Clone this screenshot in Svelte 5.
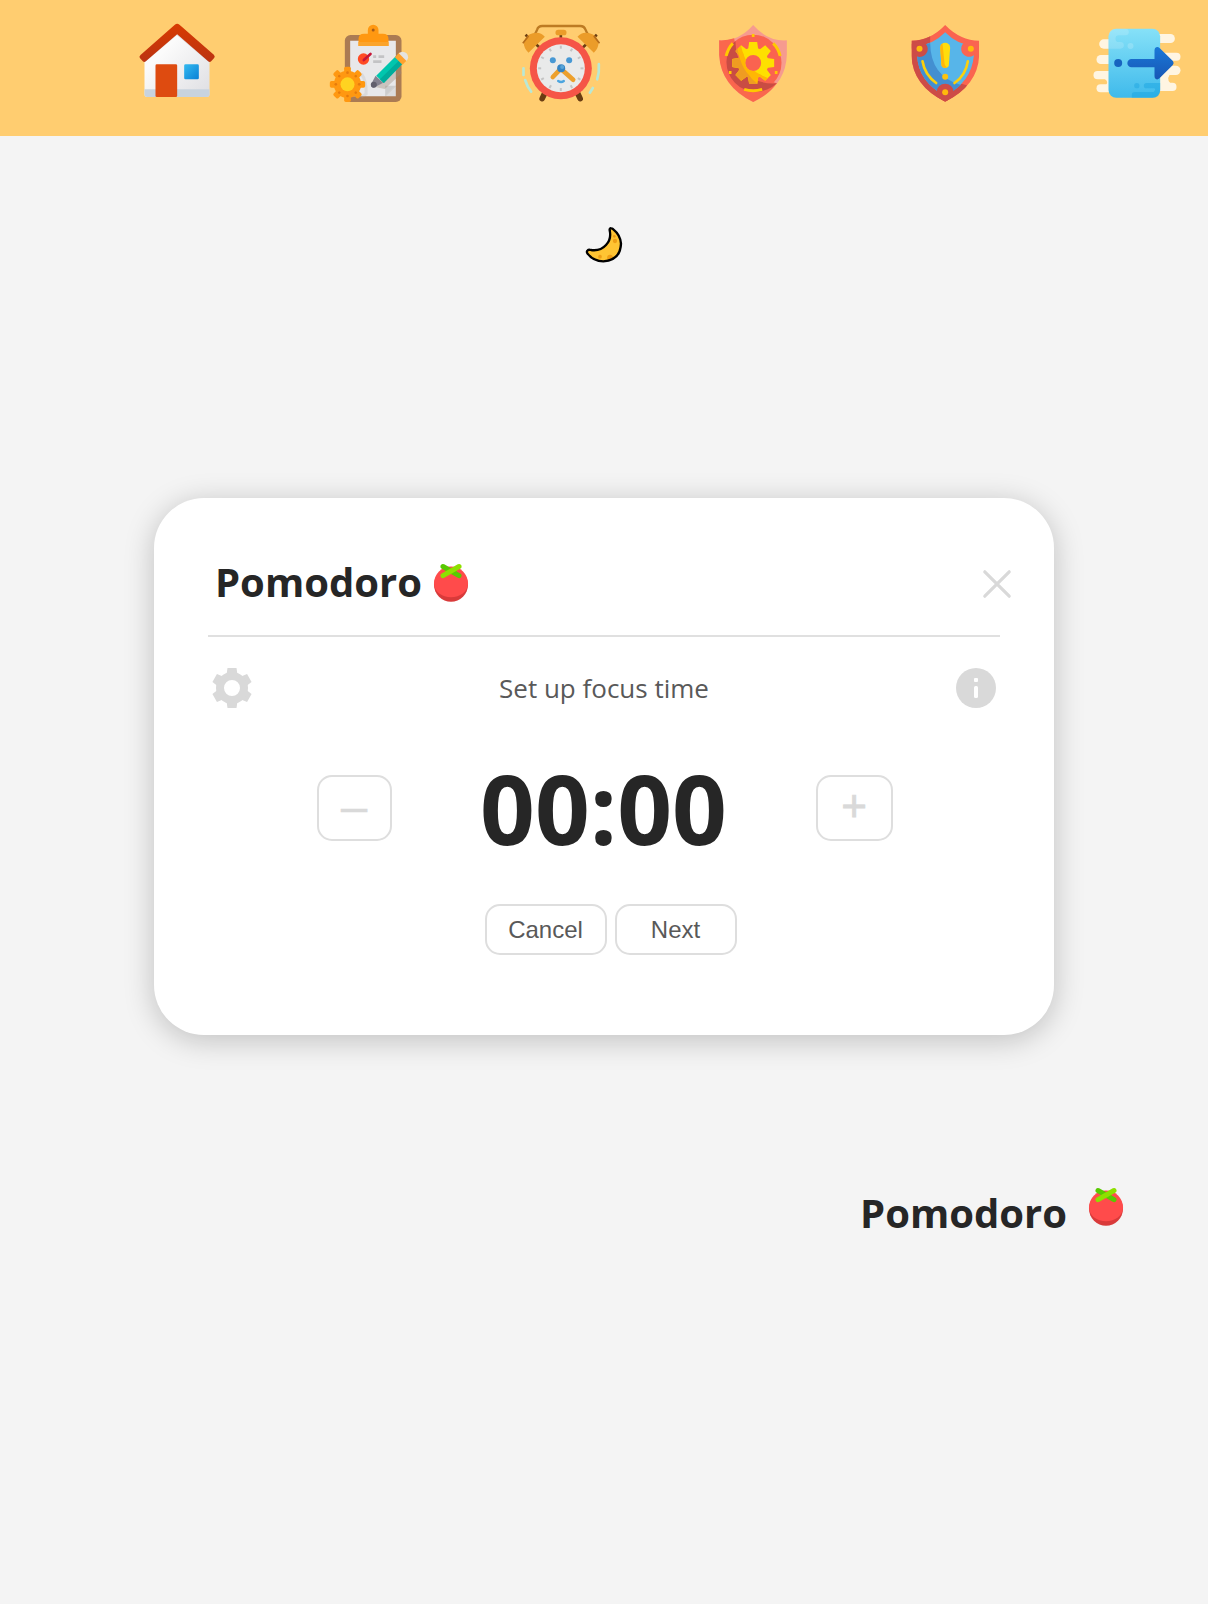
<script>
  let minutes = $state(0);
  const clock = $derived(String(minutes).padStart(2, '0') + ':00');
  const teeth = [0, 45, 90, 135, 180, 225, 270, 315];
  const cogTeeth = [0, 60, 120, 180, 240, 300];
  const ticks = [0, 30, 60, 90, 120, 150, 180, 210, 240, 270, 300, 330];
  const moon = 'M119 46q-1-7 5-6 3 0 6 3 22 18 23 43-2 50-53 53-30 0-48-24-3-6 1-9 3-3 10-1 28 4 45-15 17-18 11-44z';
</script>

{#snippet tomato()}
  <svg class="tomato" viewBox="0 0 36 40" aria-hidden="true">
    <circle cx="18" cy="21.8" r="17" fill="#d93a3a" />
    <path d="M1 20.500a17 17 0 0 1 34 0c0 8-8 13.800-17 13.800S1 28.500 1 20.500z" fill="#ff4b4b" />
    <path d="M10 3.500 26 12.700" stroke="#58c900" stroke-width="5" stroke-linecap="round" />
    <path d="M10 12.700 26 3.500" stroke="#8ee000" stroke-width="5" stroke-linecap="round" />
  </svg>
{/snippet}

<nav>
  <svg viewBox="-1.5 12 288 288" role="img" aria-label="Home">
    <defs>
      <linearGradient id="wall" x1="0" y1="0" x2="1" y2="1"><stop offset="0.3" stop-color="#fbfbfb" /><stop offset="1" stop-color="#dedee2" /></linearGradient>
      <linearGradient id="roof" x1="0" y1="0" x2="0" y2="1"><stop offset="0" stop-color="#d83b01" /><stop offset="1" stop-color="#bb3312" /></linearGradient>
      <linearGradient id="pane" x1="0" y1="0" x2="1" y2="1"><stop offset="0" stop-color="#33baf0" /><stop offset="1" stop-color="#0a80d6" /></linearGradient>
    </defs>
    <path d="M45 145 142 62l98 83v108q0 8-8 8H53q-8 0-8-8z" fill="url(#wall)" />
    <path d="M45 238h195v15q0 8-8 8H53q-8 0-8-8z" fill="#c8d3de" />
    <rect x="78" y="163" width="65" height="98" rx="4" fill="#de4b10" />
    <rect x="164" y="163" width="44" height="45" rx="4" fill="url(#pane)" />
    <path d="M45 153 142 71l98 82" fill="none" stroke="#000" stroke-opacity=".1" stroke-width="7" />
    <path d="M136 44q7-5 14 0l103 90q5 5 1 10l-9 10q-4 4-9 0l-93-81-94 81q-5 4-9 0l-9-10q-3-5 2-9z" fill="url(#roof)" />
  </svg>

  <svg viewBox="4.5 0 288 288" role="img" aria-label="Tasks">
    <rect x="76" y="63" width="170" height="201" rx="17" fill="#ab7b53" />
    <path d="M92 80h137v135l-32 32H92z" fill="#e8e8ea" />
    <path d="M197 247v-32h32z" fill="#ccc" /><path d="M197 247l32-32v32z" fill="#dcdcdd" />
    <path d="M117 96V75q0-16 17-16h11V48a16 16 0 0 1 32 0v11h13q17 0 17 16v21z" fill="#ff9811" />
    <path d="M117 84h90v12h-90z" fill="#fba42b" /><circle cx="161" cy="48" r="4.500" fill="#a65c18" />
    <circle cx="132" cy="135" r="17" fill="#ff4b24" />
    <path d="M133 138l20-18" stroke="#c71738" stroke-width="8" stroke-linecap="round" />
    <path d="M161 128h9M177 128h17M161 143h25" stroke="#c3c3c5" stroke-width="8" />
    <path d="M170 220l70-62 6 20-50 47z" fill="#9d8c7c" opacity=".4" />
    <path d="M155 211l13-26 23 21-25 14q-12 4-11-9z" fill="#858390" />
    <circle cx="163" cy="212" r="9" fill="#62606d" />
    <path d="M170 185l60-60 21 22-58 60z" fill="#00c6ae" /><path d="M181 196l60-59 10 10-58 60z" fill="#00ac9b" />
    <path d="M226 130l14-15 23 23-14 14z" fill="#ffa22d" />
    <path d="M238 118a16 16 0 1 1 23 23z" fill="#e5e3df" />
    <path d="M126 180q15 20 14 60l-15 9" fill="none" stroke="#aaa" stroke-opacity=".22" stroke-width="9" />
    {#each teeth as angle}<rect x="74" y="158" width="20" height="26" rx="5" fill="#ff9811" transform="rotate({angle} 84 211)" />{/each}
    <circle cx="84" cy="211" r="41" fill="#ff9811" />
    {#each teeth as angle}<circle cx="84" cy="176" r="4" fill="#e67b0c" transform="rotate({angle} 84 211)" />{/each}
    <circle cx="84" cy="211" r="21" fill="#ffd321" />
  </svg>

  <svg viewBox="4.5 0 288 288" role="img" aria-label="Timer">
    <path d="M55 73q14-5 22-26 3-11 15-11h114q12 0 16 11 8 21 22 26" fill="none" stroke="#bd7b23" stroke-width="7" />
    <path d="M42 62 85 101M256 62 213 101M148 52v22" stroke="#6a3d12" stroke-width="8" />
    <path d="M37 83q8-22 27-25 21-7 36 10l-49 48q-15-14-14-33zM261 83q-8-22-27-25-21-7-36 10l49 48q15-14 14-33z" fill="#eb9c29" />
    <rect x="132" y="47" width="33" height="17" rx="8" fill="#eb9c29" />
    <path d="M34 88 51 66M264 88 247 66" stroke="#b66d1c" stroke-width="5" />
    <path d="M100 237 92 254M198 237 206 254" stroke="#6a3d12" stroke-width="17" stroke-linecap="round" />
    <path d="M36 163v20M41 198q6 20 18 35M262 150q2 24-5 46M244 222l-9 14" fill="none" stroke="#b9e8d5" stroke-width="8" stroke-linecap="round" />
    <circle cx="148" cy="163" r="93" fill="#f55547" /><circle cx="148" cy="163" r="72" fill="#e9eaea" />
    {#each ticks as angle}<path d="M148 95v9" stroke="#c4c4c4" stroke-width="6" transform="rotate({angle} 148 163)" />{/each}
    <circle cx="124" cy="139" r="9" fill="#4798d4" /><circle cx="173" cy="139" r="9" fill="#4798d4" />
    <path d="M148 164l-24 25M148 164l37 33" stroke="#eda02c" stroke-width="14" stroke-linecap="round" />
    <circle cx="149" cy="163" r="12" fill="#3484c4" /><circle cx="152" cy="159" r="6" fill="#59a5d8" />
    <path d="M140 201q9 6 17 0" fill="none" stroke="#4ca5df" stroke-width="7" stroke-linecap="round" />
  </svg>

  <svg viewBox="1.5 0 288 288" role="img" aria-label="Protection settings">
    <defs>
      <clipPath id="gear-shade"><path d="M60 60h38q-4 70 28 115 14 20 34 36H60z" /></clipPath>
      <clipPath id="gear-mid"><path d="M60 60h45q5 80 50 115 25 15 45 20v20H60z" /></clipPath>
      <g id="gear">
        {#each teeth as angle}<path d="M134 84h24l4 28h-32z" transform="rotate({angle} 146 147)" />{/each}
        <path fill-rule="evenodd" d="M146 101a46 46 0 1 0 0 92 46 46 0 0 0 0-92zm0 22a24 24 0 1 1 0 48 24 24 0 0 1 0-48z" />
      </g>
    </defs>
    <path d="M44 79q58 4 102-46 44 50 101 46v44q-3 93-101 141Q49 216 44 123z" fill="#f69b8f" />
    <path d="M44 79q24 1 45-6 10 100 128 135-25 35-71 56Q49 216 44 123z" fill="#fa674d" />
    <circle cx="146" cy="147" r="85" fill="#fa6350" />
    <path d="M93 80a85 85 0 0 0 124 128q-70 5-101-47-24-36-23-81z" fill="#c94c43" />
    <use href="#gear" fill="#fee000" />
    <use href="#gear" fill="#ffb703" clip-path="url(#gear-mid)" />
    <use href="#gear" fill="#ef9c22" clip-path="url(#gear-shade)" />
    <path d="M85 88q-14 14-20 38M206 88q15 14 21 38M119 226q27 8 54 0" fill="none" stroke="#ffc900" stroke-width="9" />
    <path d="M142 60h8v9h-8zM73 171h8v9h-8zM211 171h8v9h-8z" fill="#ffc900" />
  </svg>

  <svg viewBox="7.5 0 288 288" role="img" aria-label="Alerts">
    <defs><clipPath id="shield-clip"><path d="M51 80q56 0 101-47 46 47 102 47v45q-4 89-102 138Q54 214 51 125z" /></clipPath></defs>
    <g clip-path="url(#shield-clip)">
      <path d="M40 20h230v250H40z" fill="#fa6450" /><path d="M40 20h67v85q7 85 110 109v60H40z" fill="#cd4c47" />
      <path d="M68 96q48-4 84-41 36 37 86 41v30q-7 77-86 120-80-43-84-120z" fill="#57b5e9" />
      <path d="M68 96q20-2 39-9 1 100 92 126-19 18-47 33-80-43-84-120z" fill="#438fd1" />
      <path d="M74 81a24 24 0 1 1-13 43L45 92z" fill="#cd4c47" />
      <path d="M229 81a24 24 0 1 0 9 43l18-32z" fill="#fa6450" />
      <path d="M127 248v-14a25 25 0 1 1 50 0v14l-25 18z" fill="#cd4c47" />
    </g>
    <circle cx="75" cy="104" r="9" fill="#ffb90c" /><circle cx="229" cy="104" r="9" fill="#ffb90c" /><circle cx="152" cy="235" r="9" fill="#ffb90c" />
    <path d="M84 142q7 41 41 65M220 142q-6 41-40 65" fill="none" stroke="#fcd00c" stroke-width="8" stroke-linecap="round" />
    <path d="M137 101a15 15 0 0 1 30 0l-4 53q-2 8-11 8t-11-8z" fill="#ffdd0c" />
    <path d="M137 101q0-9 7-13l6 60q2 11 9 12-16 6-18-6z" fill="#ffb60a" />
    <circle cx="152" cy="188" r="9" fill="#fcc30c" />
  </svg>

  <svg viewBox="13.5 0 288 288" role="img" aria-label="Log out">
    <defs>
      <linearGradient id="door" x1="0" y1="0" x2="0" y2="1"><stop offset="0" stop-color="#86e1f8" /><stop offset="1" stop-color="#3fbaeb" /></linearGradient>
      <linearGradient id="arrow" x1="0" y1="0" x2="0" y2="1"><stop offset="0" stop-color="#1978d8" /><stop offset="1" stop-color="#1857b5" /></linearGradient>
    </defs>
    <g fill="#fff5e2">
      <rect x="44" y="76" width="80" height="28" rx="14" /><rect x="36" y="123" width="80" height="27" rx="13" />
      <rect x="27" y="171" width="80" height="25" rx="12" /><rect x="36" y="211" width="80" height="24" rx="12" />
      <rect x="180" y="60" width="91" height="27" rx="13" /><rect x="200" y="116" width="88" height="24" rx="12" />
      <rect x="190" y="155" width="98" height="28" rx="14" /><rect x="190" y="206" width="86" height="25" rx="12" />
      <path d="M52 190h24v27H62q12-12 0-21zM220 176h42q-22 16-2 35h-40z" />
    </g>
    <rect x="72" y="44" width="155" height="207" rx="23" fill="url(#door)" />
    <path d="M72 104V67q0-23 23-23h28a10 10 0 0 1 0 20h-20a10 10 0 0 0 0 20h5a10 10 0 0 1 0 20z" fill="#fff" opacity=".16" />
    <circle cx="138" cy="96" r="9" fill="#fff" opacity=".18" />
    <path d="M227 207v21q0 23-23 23h-62v-9q0-8 9-8h57q9-11-1-11h-21a8 8 0 0 1 0-16z" fill="#16a1df" opacity=".45" /><circle cx="157" cy="215" r="8" fill="#16a1df" opacity=".4" />
    <circle cx="101" cy="147" r="12" fill="#1764c0" />
    <path d="M141 135h69v-27q0-8 7-9 4-1 9 4l39 38q5 6 0 12l-40 40q-6 5-11 2-4-2-4-8v-27h-69a12.500 12.500 0 0 1 0-25z" fill="url(#arrow)" />
  </svg>
</nav>

<main>
  <svg class="moon" viewBox="-3 0 210 180" role="img" aria-label="Dark theme">
    <defs><clipPath id="moon-clip"><path d={moon} /></clipPath></defs>
    <path d={moon} fill="#ffc433" />
    <g clip-path="url(#moon-clip)" fill="#ee9e16"><circle cx="133" cy="64" r="4" /><circle cx="135" cy="78" r="6.500" /><circle cx="90" cy="125" r="5.500" /><circle cx="120" cy="128" r="8.500" /></g>
    <path d={moon} fill="none" stroke="#000" stroke-width="7" stroke-linejoin="round" />
  </svg>

  <section class="card">
    <header>
      <h1>Pomodoro</h1>
      {@render tomato()}
      <svg class="close" viewBox="0 0 32 32" role="img" aria-label="Close"><path d="M3.800 3.800 28.200 28.200M28.200 3.800 3.800 28.200" stroke="#d9d9d9" stroke-width="3.200" stroke-linecap="round" /></svg>
    </header>
    <div class="caption">
      <svg class="tool" viewBox="0 0 40 40" role="img" aria-label="Settings">
        <g fill="#d9d9d9">
          {#each cogTeeth as angle}<path d="M15.500 0h9l1.300 9H14.200z" transform="rotate({angle} 20 20)" />{/each}
          <path fill-rule="evenodd" d="M20 4a16 16 0 1 0 0 32 16 16 0 0 0 0-32zm0 8a8 8 0 1 1 0 16 8 8 0 0 1 0-16z" />
        </g>
      </svg>
      <p>Set up focus time</p>
      <svg class="tool" viewBox="0 0 40 40" role="img" aria-label="Information">
        <circle cx="20" cy="20" r="20" fill="#d9d9d9" /><rect x="18" y="10" width="4" height="4" rx="1" fill="#fff" /><rect x="18" y="18" width="4" height="12" rx="1.500" fill="#fff" />
      </svg>
    </div>
    <div class="timer">
      <button class="step minus" onclick={() => (minutes = Math.max(0, minutes - 1))}>–</button>
      <time>{clock}</time>
      <button class="step plus" onclick={() => (minutes += 1)}>+</button>
    </div>
    <div class="actions">
      <button onclick={() => (minutes = 0)}>Cancel</button>
      <button>Next</button>
    </div>
  </section>

  <footer><h2>Pomodoro</h2>{@render tomato()}</footer>
</main>

<style>
  :global(body) { background: #f4f4f4; font-family: "Open Sans", sans-serif; color: #262626; }
  nav { display: flex; gap: 96px; height: 136px; box-sizing: border-box; padding: 14px 0 0 129px; background: #ffcd70; }
  nav svg { width: 96px; height: 96px; flex: none; }
  main { display: flex; flex-direction: column; align-items: center; min-height: 1468px; box-sizing: border-box; padding-top: 79px; }
  .moon { width: 70px; height: 60px; }
  .card { width: 900px; height: 537px; margin-top: 223px; box-sizing: border-box; padding: 47px 54px 0; border-radius: 50px; background: #fff; box-shadow: 0 5px 30px rgba(0, 0, 0, .22); }
  header { display: flex; align-items: center; height: 92px; box-sizing: border-box; padding-left: 7px; padding-bottom: 14px; border-bottom: 2px solid #e0e0e0; }
  h1, h2 { margin: 0; font-size: 40px; line-height: 54px; font-weight: 700; }
  h1 { padding-bottom: 2px; }
  .tomato { width: 36px; height: 40px; flex: none; }
  header .tomato { margin-left: 11px; }
  .close { width: 32px; height: 32px; margin: 2px -13px 0 auto; flex: none; }
  .caption { display: flex; justify-content: space-between; align-items: center; height: 102px; padding: 0 4px; }
  .tool { width: 40px; height: 40px; }
  p { margin: 0; font-size: 26px; color: #595959; }
  .timer { display: flex; justify-content: center; align-items: center; height: 132px; margin: 3px 0 0 1px; }
  time { width: 240px; margin: 0 92px; font-size: 96px; line-height: 130px; font-weight: 700; display: flex; justify-content: center; }
  button { box-sizing: border-box; padding: 0; background: #fff; border: 2px solid #dedede; border-radius: 15px; font-family: "Liberation Sans", Arial, sans-serif; color: #595959; }
  .step { height: 66px; line-height: 49px; color: #d9d9d9; -webkit-text-stroke: .5px #d9d9d9; }
  .minus { width: 75px; font-size: 47px; padding-bottom: 6px; }
  .plus { width: 77px; font-size: 44px; padding-bottom: 6px; -webkit-text-stroke-width: .8px; }
  .actions { display: flex; justify-content: center; gap: 8px; margin: 30px 0 0 13px; }
  .actions button { width: 122px; height: 51px; font-size: 24px; }
  footer { display: flex; align-self: flex-end; margin: 151px 84px 0 0; gap: 21px; }
  footer .tomato { margin-top: 1px; }
</style>
